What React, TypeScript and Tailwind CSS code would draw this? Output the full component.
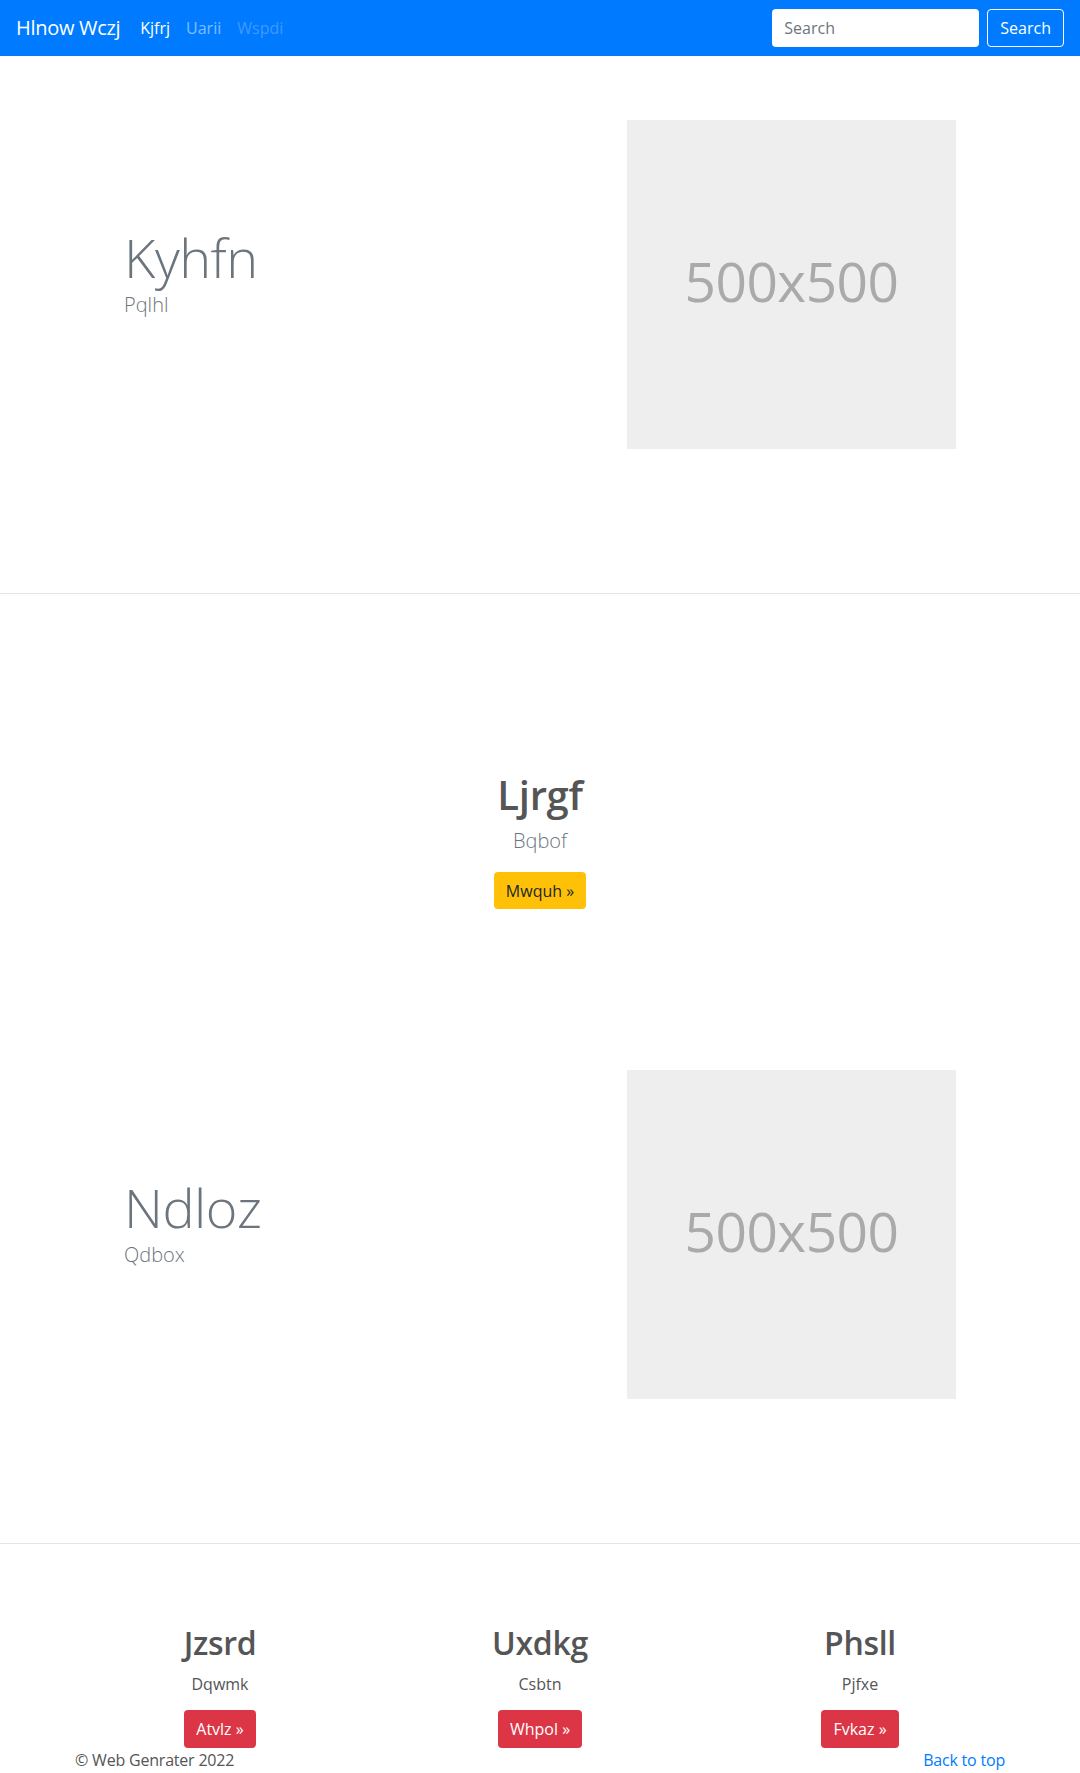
const font = { fontFamily: '"Open Sans", "Noto Sans", sans-serif' };

function Placeholder() {
  return (
    <div className="w-[329px] h-[329px] bg-[#eeeeee] flex items-center justify-center">
      <span className="text-[55px] text-[#aaaaaa] leading-none tracking-[-0.5px] mb-[8px]">500x500</span>
    </div>
  );
}

function Feature({ title, sub }: { title: string; sub: string }) {
  return (
    <div className="w-[960px] mx-auto flex items-center pt-[64px] pb-[144px]">
      <div className="w-[480px] pl-[64px]">
        <h1 className="text-[54px] font-light leading-[1.2] text-[#6c757d] tracking-[-0.5px]">{title}</h1>
        <p className="text-[20px] font-light leading-[1.5] text-[#6c757d] mb-6">{sub}</p>
      </div>
      <div className="w-[480px] pl-[87px]">
        <Placeholder />
      </div>
    </div>
  );
}

const cols = [
  { title: "Jzsrd", sub: "Dqwmk", btn: "Atvlz" },
  { title: "Uxdkg", sub: "Csbtn", btn: "Whpol" },
  { title: "Phsll", sub: "Pjfxe", btn: "Fvkaz" },
];

export default function App() {
  return (
    <div className="bg-white text-[#212529]" style={font}>
      <nav className="h-[56px] bg-[#007bff] flex items-center px-4">
        <span className="text-[20px] text-white leading-[30px] mr-3 tracking-[-0.3px]">Hlnow Wczj</span>
        <a className="px-2 text-white text-[16px]">Kjfrj</a>
        <a className="px-2 text-white/50 text-[16px]">Uarii</a>
        <a className="px-2 text-white/25 text-[16px]">Wspdi</a>
        <div className="ml-auto flex items-center gap-2">
          <input
            placeholder="Search"
            className="w-[207px] h-[38px] rounded bg-white px-3 text-[16px] text-[#495057] placeholder:text-[#6c757d] outline-none"
          />
          <button className="h-[38px] px-3 rounded border border-white text-white text-[16px]">Search</button>
        </div>
      </nav>

      <Feature title="Kyhfn" sub="Pqlhl" />
      <hr className="border-t border-[#e5e5e5]" />

      <div className="flex flex-col items-center pt-[177px] pb-[97px]">
        <h1 className="text-[40px] font-semibold leading-[1.2] text-[#555555] tracking-[-0.3px]">Ljrgf</h1>
        <p className="text-[20px] font-light leading-[1.5] text-[#6c757d] mt-[7px]">Bqbof</p>
        <button className="mt-[16px] h-[37px] px-3 rounded bg-[#ffc107] text-[#212529] text-[16px]">Mwquh »</button>
      </div>

      <Feature title="Ndloz" sub="Qdbox" />
      <hr className="border-t border-[#e5e5e5]" />

      <div className="w-[960px] mx-auto grid grid-cols-3 pt-[80px]">
        {cols.map((c) => (
          <div key={c.title} className="flex flex-col items-center">
            <h2 className="text-[32px] font-semibold leading-[1.2] text-[#555555] tracking-[-0.3px]">{c.title}</h2>
            <p className="text-[16px] leading-[1.5] text-[#555555] mt-[10px]">{c.sub}</p>
            <button className="mt-[14px] h-[38px] px-3 rounded bg-[#dc3545] text-white text-[16px]">{c.btn} »</button>
          </div>
        ))}
      </div>

      <footer className="w-[960px] mx-auto px-[15px] flex justify-between text-[16px] leading-[24px] tracking-[-0.2px]">
        <span className="text-[#555555]">© Web Genrater 2022</span>
        <a className="text-[#007bff]">Back to top</a>
      </footer>
    </div>
  );
}
